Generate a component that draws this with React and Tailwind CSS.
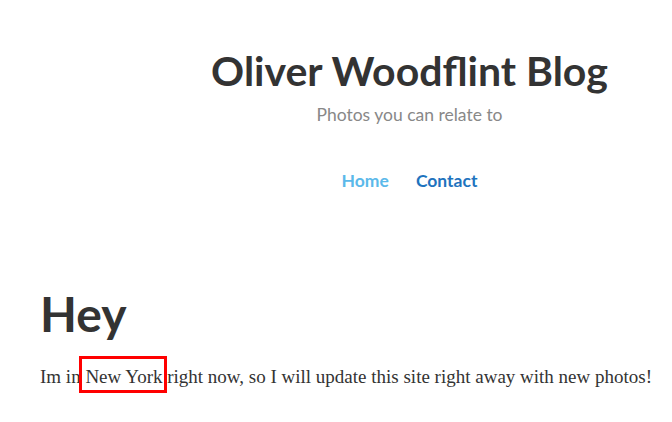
import React from "react";

const App = () => {
  return (
    <div className="w-[672px] h-[422px] bg-white overflow-hidden">
      {/* header */}
      <header className="pl-[147px] pt-[47px] flex flex-col items-center font-['Lato',sans-serif]">
        <h1 className="text-[41px] leading-[48px] font-bold text-[#333333]">Oliver Woodflint Blog</h1>
        <p className="mt-[9px] text-[17.5px] leading-[22px] text-[#888888]">Photos you can relate to</p>
        <nav className="mt-[42px] flex items-center gap-[27px] text-[17.5px] font-bold">
          <a className="text-[#5bb9ea]">Home</a>
          <a className="text-[#1e73be]">Contact</a>
        </nav>
      </header>

      {/* post */}
      <main className="pl-[40px] pt-[92px]">
        <h2 className="font-['Lato',sans-serif] text-[48px] leading-[56px] font-bold text-[#333333]">Hey</h2>
        <p className="mt-[21px] whitespace-nowrap font-['Liberation_Serif',serif] text-[19px] leading-[28px] text-[#333333]">
          Im in{" "}
          <span className="relative">
            New York
            <span className="absolute -left-[6px] -right-[5px] -top-[10px] -bottom-[6px] border-[3px] border-[#ff0000]"></span>
          </span>{" "}
          right now, so I will update this site right away with new photos!
        </p>
      </main>
    </div>
  );
};

export default App;
